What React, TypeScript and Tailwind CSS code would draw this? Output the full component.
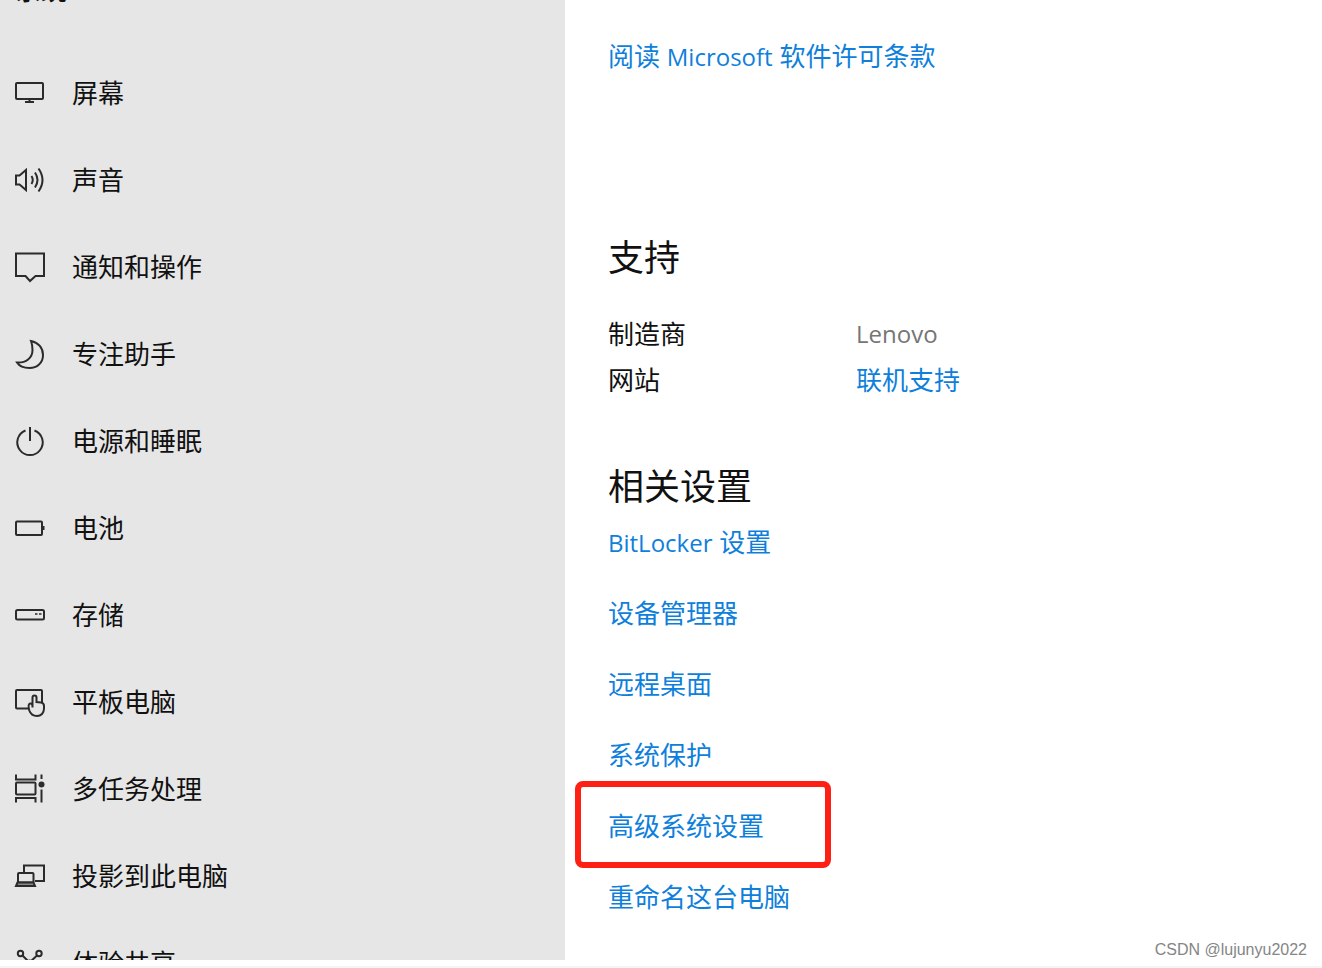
import type { ReactNode } from 'react'

type NavItem = {
  label: string
  icon: ReactNode
}

const navItems: NavItem[] = [
  {
    label: '屏幕',
    icon: (
      <>
        <rect x="2" y="5" width="27" height="16" rx="1" />
        <path d="M15.500 20v4M11 24h9" />
      </>
    ),
  },
  {
    label: '声音',
    icon: (
      <>
        <path d="M2 10.500h3.500L12 5v20l-6.500-5.500H2z" />
        <path d="M17.500 11q2.500 4 0 8M21 7.500q5 7.500 0 15M24.500 3.500q8 11.500 0 23" />
      </>
    ),
  },
  {
    label: '通知和操作',
    icon: <path d="M2 1.500h28V24h-8.500L16 29l-4.500-5H2z" />,
  },
  {
    label: '专注助手',
    icon: <path d="M17 2C24.500 3.500 29 9 29 16c0 8-6 13-13.500 13C10 29 5.500 27.500 3 23.500 12 24 18.500 19 18.500 11c0-3.500-.5-6.500-1.500-9z" />,
  },
  {
    label: '电源和睡眠',
    icon: <path d="M11.500 4.500a12.700 12.700 0 1 0 9 0M16 1v14" />,
  },
  {
    label: '电池',
    icon: (
      <>
        <rect x="2" y="8.500" width="26" height="13.500" rx="1" />
        <path d="M29.500 13v4" />
      </>
    ),
  },
  {
    label: '存储',
    icon: (
      <>
        <rect x="2" y="10" width="28" height="9.500" rx="1.500" />
        <path d="M21 14h2.500M25 14h2.500" strokeWidth="1.500" />
      </>
    ),
  },
  {
    label: '平板电脑',
    icon: (
      <>
        <path d="M14 21.500H3a1 1 0 0 1-1-1V4a1 1 0 0 1 1-1h24a1 1 0 0 1 1 1v11" />
        <path d="M18.500 20.500V10.500a2 2 0 0 1 4 0V15l4.500.5c2.200.3 3 1.300 3 3.500v2.500c0 4.500-3 7.500-7 7.500s-6.500-2-7.700-5.500c-.8-3-.8-6.500.7-7 1.500-.4 2.500 1 2.500 3z" />
      </>
    ),
  },
  {
    label: '多任务处理',
    icon: (
      <>
        <path d="M2 .5v5h19.500v-5M2 28.500V24h19.500v4.500" />
        <rect x="2" y="8.500" width="19.500" height="12" rx="1" />
        <path d="M27.500.5V5M27.500 15.500v13" />
        <circle cx="27.500" cy="10.500" r="3" fill="currentColor" stroke="none" />
      </>
    ),
  },
  {
    label: '投影到此电脑',
    icon: (
      <>
        <path d="M10 12V4.500h20V20h-9" />
        <rect x="4" y="12" width="15.500" height="9.500" rx="1" />
        <path d="M3.500 21.500 2 25h19l-1.500-3.500z" fill="#888" />
      </>
    ),
  },
  {
    label: '体验共享',
    icon: (
      <>
        <circle cx="6.500" cy="5.500" r="2.700" />
        <circle cx="25" cy="5.500" r="2.700" />
        <path d="m8.500 7.500 7 7 7.500-7M15.500 14.500 8 22M15.500 14.500 24 22" />
        <circle cx="15.700" cy="14" r="2.500" fill="currentColor" stroke="none" />
        <circle cx="6.500" cy="24" r="2.700" />
        <circle cx="25" cy="24" r="2.700" />
      </>
    ),
  },
]

const relatedLinks: { label: ReactNode; key: string; highlighted?: boolean }[] = [
  {
    key: 'bitlocker',
    label: (
      <>
        <span className="text-[24px]">BitLocker</span> 设置
      </>
    ),
  },
  { key: 'devices', label: '设备管理器' },
  { key: 'remote', label: '远程桌面' },
  { key: 'protection', label: '系统保护' },
  { key: 'advanced', label: '高级系统设置', highlighted: true },
  { key: 'rename', label: '重命名这台电脑' },
]

function Sidebar() {
  return (
    <nav aria-label="系统" className="w-[565px] shrink-0 overflow-hidden bg-[#e6e6e6]">
      <h2 className="-mt-[26px] mb-11 pl-[15px] leading-8 font-medium">系统</h2>
      <ul>
        {navItems.map((item) => (
          <li key={item.label}>
            <a href="#" className="flex h-[87px] items-center gap-[26px] px-[14px]">
              <svg
                viewBox="0 0 32 31"
                className="h-[31px] w-8 shrink-0 text-[#2b2b2b]"
                fill="none"
                stroke="currentColor"
                strokeWidth="2"
                aria-hidden="true"
              >
                {item.icon}
              </svg>
              {item.label}
            </a>
          </li>
        ))}
      </ul>
    </nav>
  )
}

function SupportSection() {
  return (
    <section className="mt-[162px]">
      <h2 className="text-[36px] leading-[42px]">支持</h2>
      <dl className="mt-8 grid grid-cols-[248px_1fr] leading-[46px]">
        <dt>制造商</dt>
        <dd className="text-[24px] text-[#767676]">Lenovo</dd>
        <dt>网站</dt>
        <dd>
          <a href="#" className="text-[#0f7fdc]">联机支持</a>
        </dd>
      </dl>
    </section>
  )
}

function RelatedSettings() {
  return (
    <section className="mt-[63px]">
      <h2 className="text-[36px] leading-[42px]">相关设置</h2>
      <ul className="-mt-px">
        {relatedLinks.map((link) => (
          <li key={link.key} className="relative flex h-[71px] items-center">
            <a href="#" className="text-[#0f7fdc]">{link.label}</a>
            {link.highlighted && (
              <span className="pointer-events-none absolute -top-[10px] -left-[33px] h-[87px] w-[256px] rounded-lg border-[6px] border-[#ff2015]" />
            )}
          </li>
        ))}
      </ul>
    </section>
  )
}

export default function App() {
  return (
    <div className="flex h-screen flex-col overflow-hidden bg-white font-['Open_Sans','Noto_Sans_CJK_SC',sans-serif] text-[26px] text-[#111]">
      <div className="flex min-h-0 flex-1">
        <Sidebar />
        <main className="min-w-0 flex-1 pt-[38px] pl-[43px]">
          <p className="leading-9">
            <a href="#" className="text-[#0f7fdc]">
              阅读 <span className="text-[24px]">Microsoft</span> 软件许可条款
            </a>
          </p>
          <SupportSection />
          <RelatedSettings />
        </main>
      </div>
      <footer className="relative h-2 shrink-0 border-b-2 border-[#f5f5f5]">
        <span className="absolute right-[15px] bottom-1.5 font-['Liberation_Sans',sans-serif] text-[16px] leading-5 text-[#858585]">
          CSDN @lujunyu2022
        </span>
      </footer>
    </div>
  )
}
